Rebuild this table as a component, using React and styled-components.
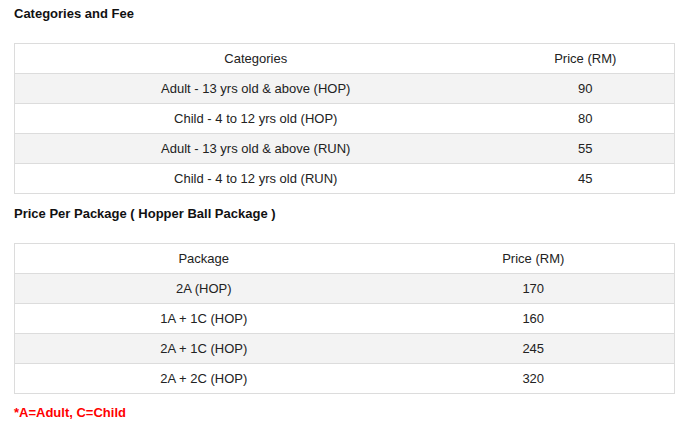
import React from 'react'
import styled, { createGlobalStyle } from 'styled-components'

const GlobalStyle = createGlobalStyle`
  body {
    margin: 0;
    background: #fff;
    font-family: "Liberation Sans", Arial, sans-serif;
    color: #222;
  }
`;

const Page = styled.div`
  padding: 6px 21px 0 14px;
`;

const Title = styled.h3`
  margin: ${(p) => (p.$first ? '0' : '12px')} 0 0;
  font-size: 13px;
  font-weight: bold;
  line-height: 16px;
  color: #111;
`;

const Table = styled.table`
  width: 100%;
  margin-top: 21px;
  border-collapse: collapse;
  border: 1px solid #dcdcdc;
  font-size: 13px;
`;

const Row = styled.tr`
  height: 30px;
  background: ${(p) => (p.$striped ? '#f3f3f3' : '#fff')};
`;

const Cell = styled.td`
  padding: 0;
  text-align: center;
  vertical-align: middle;
  border-top: 1px solid #dcdcdc;
  color: #222;
`;

const Note = styled.p`
  margin: 11px 0 0;
  font-size: 13px;
  font-weight: bold;
  line-height: 16px;
  color: #ff0000;
`;

const fees = [
  ['Adult - 13 yrs old & above (HOP)', '90'],
  ['Child - 4 to 12 yrs old (HOP)', '80'],
  ['Adult - 13 yrs old & above (RUN)', '55'],
  ['Child - 4 to 12 yrs old (RUN)', '45'],
]

const packages = [
  ['2A (HOP)', '170'],
  ['1A + 1C (HOP)', '160'],
  ['2A + 1C (HOP)', '245'],
  ['2A + 2C (HOP)', '320'],
]

const PriceTable = ({ head, rows, firstWidth }) => (
  <Table>
    <colgroup>
      <col style={{ width: firstWidth }} />
      <col />
    </colgroup>
    <tbody>
      <Row>
        <Cell>{head}</Cell>
        <Cell>Price (RM)</Cell>
      </Row>
      {rows.map(([name, price], i) => (
        <Row key={name} $striped={i % 2 === 0}>
          <Cell>{name}</Cell>
          <Cell>{price}</Cell>
        </Row>
      ))}
    </tbody>
  </Table>
)

const App = () => (
  <>
    <GlobalStyle />
    <Page>
      <Title $first>Categories and Fee</Title>
      <PriceTable head="Categories" rows={fees} firstWidth="482px" />
      <Title>Price Per Package ( Hopper Ball Package )</Title>
      <PriceTable head="Package" rows={packages} firstWidth="378px" />
      <Note>*A=Adult, C=Child</Note>
    </Page>
  </>
)

export default App
